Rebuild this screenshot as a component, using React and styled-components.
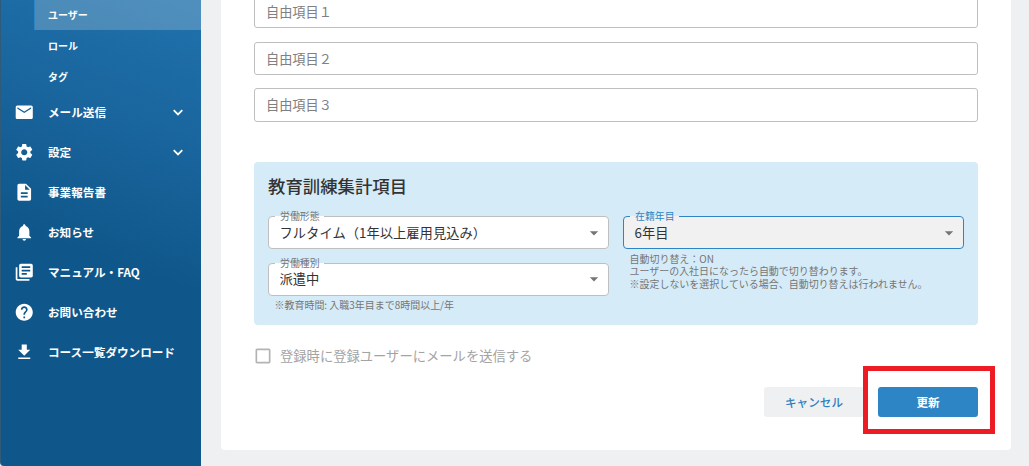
import styled, { createGlobalStyle } from 'styled-components';
import {
    MdEmail,
    MdSettings,
    MdDescription,
    MdNotifications,
    MdLibraryBooks,
    MdHelp,
    MdFileDownload,
    MdArrowDropDown,
    MdCheckBoxOutlineBlank
} from 'react-icons/md';

const GlobalStyle = createGlobalStyle`
    * {
        box-sizing: border-box;
    }
    body {
        margin: 0;
        overflow: hidden;
        background: #eff0f2;
        font-family: "Noto Sans CJK JP", sans-serif;
    }
`

const Layout = styled.div`
    display: flex;
    width: 1029px;
    height: 466px;
`

const Sidebar = styled.nav`
    width: 201px;
    flex: none;
    color: #fff;
    border-left: 1px solid #2f5a78;
    border-bottom-left-radius: 4px;
    background: linear-gradient(200deg, #2072ad 0%, #1a669f 25%, #0f578a 55%, #0f578a 100%);
`

const SubItem = styled.div`
    height: ${props => props.$active ? 30 : 31}px;
    margin-left: 33px;
    padding-left: ${props => props.$active ? 13 : 14}px;
    padding-bottom: ${props => props.$active ? 1 : 0}px;
    display: flex;
    align-items: center;
    font-size: 10px;
    font-weight: 700;
    background: ${props => props.$active ? 'rgba(255,255,255,0.21)' : 'none'};
    border-left: ${props => props.$active ? '1px solid #2d85c5' : 'none'};
`

const MenuItem = styled.div`
    height: 40px;
    padding: 0 18px 0 13px;
    display: flex;
    align-items: center;
    font-size: 11.6px;
    font-weight: 700;

    svg {
        flex: none;
    }
`

const MenuLabel = styled.span`
    flex: 1;
    margin-left: 13.5px;
    white-space: nowrap;
`

const Main = styled.main`
    flex: 1;
    padding: 0 18px 16px 20px;
`

const Card = styled.section`
    height: 450px;
    padding: 0 33px;
    background: #fff;
    border-radius: 0 0 4px 4px;
`

const Fields = styled.div`
    height: 122px;
    display: flex;
    flex-direction: column;
    justify-content: flex-end;
`

const TextField = styled.div`
    flex: none;
    height: ${props => props.$height}px;
    margin-top: ${props => props.$gap}px;
    padding: 0 11px 1px;
    display: flex;
    align-items: center;
    border: 1px solid #bfbfbf;
    border-radius: 3px;
    color: #808080;
    font-size: 13.2px;
    font-weight: 400;
`

const Panel = styled.section`
    height: 163px;
    margin-top: 40px;
    padding: 10px 14px 0;
    background: #d5ebf8;
    border-radius: 4px;
`

const PanelTitle = styled.h2`
    margin: 0;
    height: 27px;
    line-height: 27px;
    color: #333;
    font-size: 17.4px;
    font-weight: 500;
`

const Columns = styled.div`
    display: grid;
    grid-template-columns: 341px 341px;
    gap: 14px;
    margin-top: 17px;
`

const SelectBox = styled.div`
    position: relative;
    height: 33px;
    margin-bottom: ${props => props.$last ? 0 : 14}px;
    padding: 0 4px ${props => props.$raised ? 2 : 0}px 10.5px;
    display: flex;
    align-items: center;
    justify-content: space-between;
    border: 1px solid ${props => props.$focused ? '#2d85c5' : '#bfbfbf'};
    border-radius: 4px;
    background: ${props => props.$focused ? '#f1f1f1' : '#fff'};
    color: #333;
    font-size: 13.3px;

    svg {
        color: #757575;
    }
`

const SelectLabel = styled.span`
    position: absolute;
    top: -8px;
    left: 6px;
    padding: 0 4px 0 5px;
    line-height: 14px;
    font-size: 9.9px;
    color: ${props => props.$focused ? '#2d85c5' : '#757575'};
    background: linear-gradient(#d5ebf8 0 7px, ${props => props.$focused ? '#f1f1f1' : '#fff'} 7px);
`

const Helper = styled.p`
    margin: ${props => props.$single ? 2.5 : 3.5}px 0 0 6.5px;
    color: #757575;
    font-size: 9.97px;
    line-height: 12.6px;
    white-space: nowrap;
`

const CheckRow = styled.div`
    height: 20px;
    margin-top: 21px;
    display: flex;
    align-items: center;
    color: #a3a3a3;
    font-size: 13.3px;
    font-weight: 400;

    svg {
        margin: 0 7px 0 -1px;
        color: #b3b3b3;
    }
`

const CheckText = styled.span`
    margin-top: -2px;
`

const Actions = styled.div`
    display: flex;
    justify-content: flex-end;
    gap: 14px;
    margin-top: 21px;
`

const Button = styled.button`
    width: 100px;
    height: 30px;
    padding: 0;
    border: 0;
    border-radius: 3px;
    font-family: inherit;
    font-size: 11.6px;
    font-weight: ${props => props.$primary ? 700 : 500};
    color: ${props => props.$primary ? '#fff' : '#2d7fc0'};
    background: ${props => props.$primary ? '#2d85c5' : '#eff0f2'};
`

const Highlighted = styled.div`
    position: relative;
    display: flex;

    &::after {
        content: '';
        position: absolute;
        inset: -21px -17px -17px -15px;
        border: 5px solid #ed1c24;
        pointer-events: none;
    }
`

const subItems = ['ユーザー', 'ロール', 'タグ']

const menuItems = [
    { label: 'メール送信', icon: MdEmail, expandable: true },
    { label: '設定', icon: MdSettings, expandable: true },
    { label: '事業報告書', icon: MdDescription },
    { label: 'お知らせ', icon: MdNotifications },
    { label: 'マニュアル・FAQ', icon: MdLibraryBooks },
    { label: 'お問い合わせ', icon: MdHelp },
    { label: 'コース一覧ダウンロード', icon: MdFileDownload },
]

function Chevron() {
    return (
        <svg width="10" height="7" viewBox="0 0 10 7" fill="none" stroke="currentColor" strokeWidth="1.8">
            <path d="M0.7 1.2 5 5.4 9.3 1.2" />
        </svg>
    );
}

function Select({ label, value, focused, last, raised }) {
    return (
        <SelectBox $focused={focused} $last={last} $raised={raised}>
            <SelectLabel $focused={focused}>{label}</SelectLabel>
            <span>{value}</span>
            <MdArrowDropDown size={20} />
        </SelectBox>
    );
}

function App() {
    return (
        <Layout>
            <GlobalStyle />
            <Sidebar>
                {subItems.map((item, i) => (
                    <SubItem key={item} $active={i === 0}>{item}</SubItem>
                ))}
                {menuItems.map(({ label, icon: Icon, expandable }) => (
                    <MenuItem key={label}>
                        <Icon size={20.5} />
                        <MenuLabel>{label}</MenuLabel>
                        {expandable && <Chevron />}
                    </MenuItem>
                ))}
            </Sidebar>
            <Main>
                <Card>
                    <Fields>
                        <TextField $height={33} $gap={0}>自由項目１</TextField>
                        <TextField $height={33} $gap={14}>自由項目２</TextField>
                        <TextField $height={34} $gap={13}>自由項目３</TextField>
                    </Fields>
                    <Panel>
                        <PanelTitle>教育訓練集計項目</PanelTitle>
                        <Columns>
                            <div>
                                <Select label="労働形態" value="フルタイム（1年以上雇用見込み）" />
                                <Select label="労働種別" value="派遣中" last raised />
                                <Helper $single>※教育時間: 入職3年目まで8時間以上/年</Helper>
                            </div>
                            <div>
                                <Select label="在籍年目" value="6年目" focused last />
                                <Helper>
                                    自動切り替え：ON<br />
                                    ユーザーの入社日になったら自動で切り替わります。<br />
                                    ※設定しないを選択している場合、自動切り替えは行われません。
                                </Helper>
                            </div>
                        </Columns>
                    </Panel>
                    <CheckRow>
                        <MdCheckBoxOutlineBlank size={20} />
                        <CheckText>登録時に登録ユーザーにメールを送信する</CheckText>
                    </CheckRow>
                    <Actions>
                        <Button>キャンセル</Button>
                        <Highlighted>
                            <Button $primary>更新</Button>
                        </Highlighted>
                    </Actions>
                </Card>
            </Main>
        </Layout>
    );
}

export default App
